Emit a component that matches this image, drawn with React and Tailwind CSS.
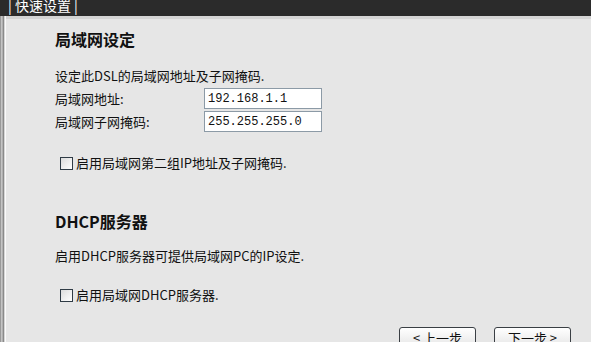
import React from "react"

const cjk = { fontFamily: '"Noto Sans CJK SC", "Noto Sans", sans-serif' }

function Checkbox() {
  return (
    <span className="inline-block w-[13px] h-[13px] border border-[#2f3b45] bg-gradient-to-br from-[#dcdcdc] to-[#ffffff] shrink-0"></span>
  )
}

function Field({ label, value }) {
  return (
    <div className="flex items-center h-[21px]">
      <span className="w-[149px] text-[13px] leading-[16px]">{label}</span>
      <div className="w-[118px] h-[21px] bg-white border border-[#8c9aa6] flex items-center pl-[3px] font-['Liberation_Mono',monospace] text-[12px] text-[#111]">
        {value}
      </div>
    </div>
  )
}

function StepButton({ children }) {
  return (
    <button className="w-[77px] h-[22px] border border-[#3a3f44] rounded-[3px] bg-gradient-to-b from-[#ffffff] to-[#e4e4e4] text-[13px] leading-[18px] text-[#111] flex justify-center pt-[1px]">
      {children}
    </button>
  )
}

export default function App() {
  return (
    <div className="w-[591px] h-[342px] overflow-hidden bg-[#e6e6e6] text-[#111]" style={cjk}>
      {/* title bar */}
      <div className="h-[16px] bg-[#2b2b2b] flex items-end pl-[8px] overflow-hidden">
        <span className="text-white text-[14px] leading-[14px] translate-y-[-4px]">| 快速设置 |</span>
      </div>

      <div className="flex h-[326px]">
        {/* left edge */}
        <div className="flex shrink-0">
          <div className="w-[1px] bg-[#9a9a9a]"></div>
          <div className="w-[1px] bg-[#c4c4c4]"></div>
          <div className="w-[1px] bg-[#b0b0b0]"></div>
          <div className="w-[1px] bg-[#8a8a8a]"></div>
          <div className="w-[1px] bg-[#d6d6d6]"></div>
          <div className="w-[1px] bg-[#fafafa]"></div>
        </div>

        <div className="flex-1 flex flex-col border-t-[3px] border-[#d4d4d4] pl-[49px]">
          <h2 className="mt-[10px] text-[16px] leading-[20px] font-bold">局域网设定</h2>

          <p className="mt-[19px] text-[13px] leading-[16px]">设定此DSL的局域网地址及子网掩码.</p>

          <div className="mt-[4px] flex flex-col gap-[2px]">
            <Field label="局域网地址:" value="192.168.1.1" />
            <Field label="局域网子网掩码:" value="255.255.255.0" />
          </div>

          <label className="mt-[23px] ml-[5px] flex items-center gap-[3px] text-[13px] leading-[16px]">
            <Checkbox />
            <span>启用局域网第二组IP地址及子网掩码.</span>
          </label>

          <h2 className="mt-[40px] text-[16px] leading-[20px] font-bold">DHCP服务器</h2>

          <p className="mt-[17px] text-[13px] leading-[16px]">启用DHCP服务器可提供局域网PC的IP设定.</p>

          <label className="mt-[23px] ml-[5px] flex items-center gap-[3px] text-[13px] leading-[16px]">
            <Checkbox />
            <span>启用局域网DHCP服务器.</span>
          </label>

          <div className="mt-[24px] flex justify-end gap-[18px] pr-[20px]">
            <StepButton>&lt; 上一步</StepButton>
            <StepButton>下一步 &gt;</StepButton>
          </div>
        </div>
      </div>
    </div>
  )
}
